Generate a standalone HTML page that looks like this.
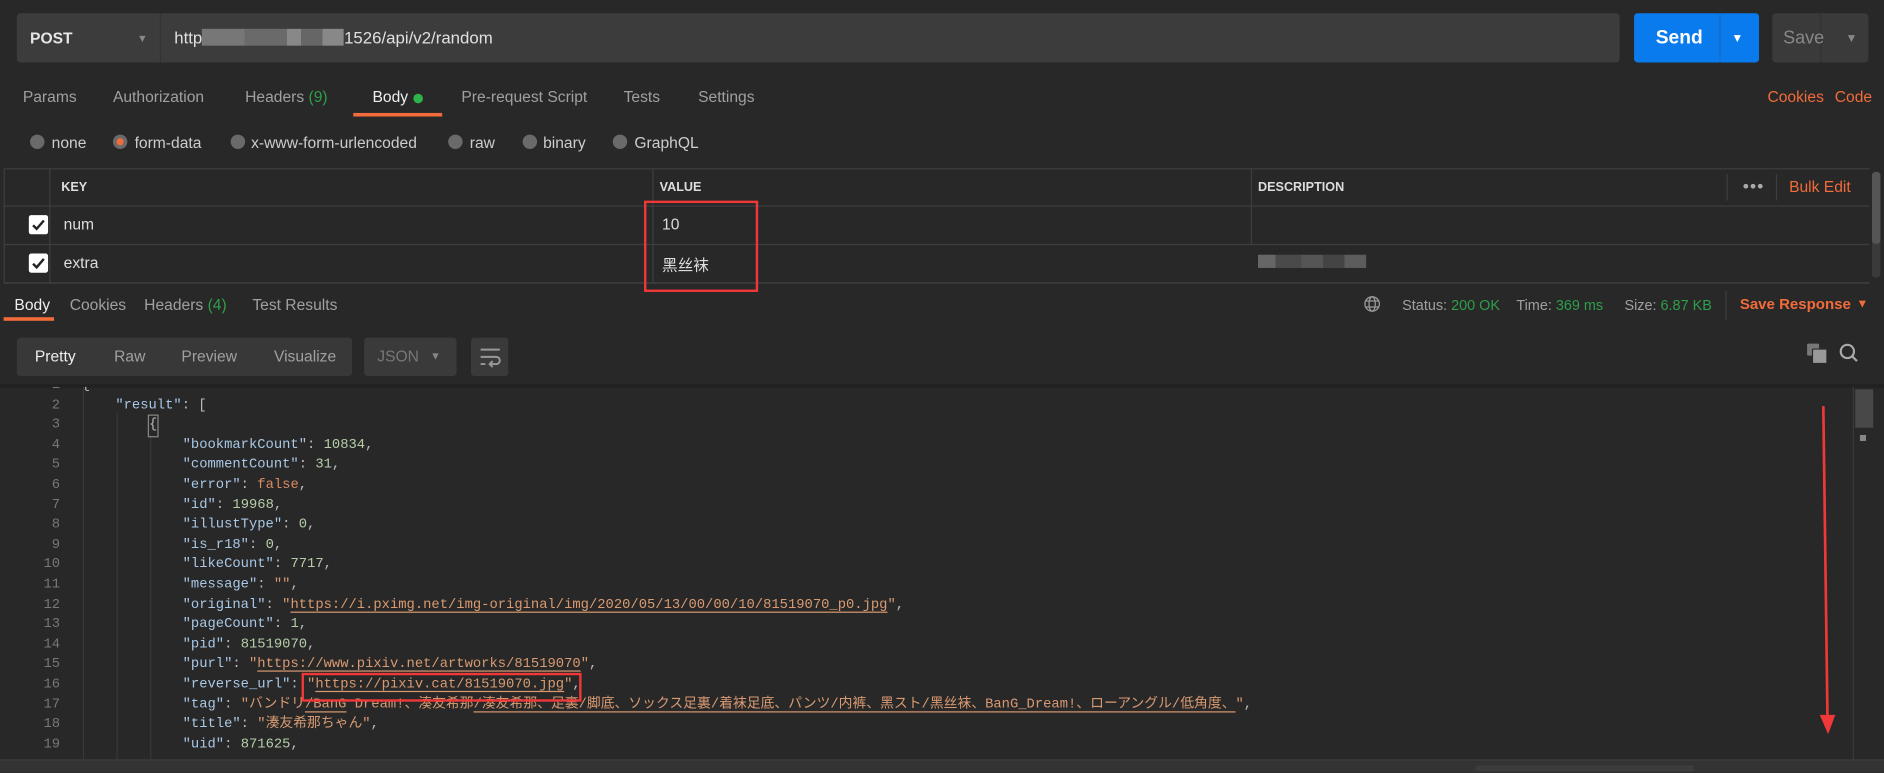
<!DOCTYPE html>
<html><head><meta charset="utf-8">
<style>
html,body{margin:0;padding:0;background:#282828;overflow:hidden;width:1884px;height:771px}
#w{position:absolute;left:0;top:0;width:1568px;height:642px;transform:scale(1.20153);transform-origin:0 0;background:#282828;font-family:"Liberation Sans","Noto Sans CJK SC",sans-serif;color:#a0a0a0;font-size:13px}
.a{position:absolute;white-space:nowrap}
.or{color:#f26b3a}
.gr{color:#2f9e4a}
.code{font-family:"Liberation Mono","Noto Sans CJK JP",monospace;font-size:11.5px;line-height:16.6px}
.k{color:#a9c8e6}.s{color:#d99a72}.n{color:#b5cea8}.p{color:#bbb}.b{color:#d98c62}
.u{text-decoration:underline;text-decoration-color:#d99a72;text-underline-offset:3px}
.ln{position:absolute;left:20px;width:30px;text-align:right;color:#777}
.rad{position:absolute;width:12px;height:12px;border-radius:50%;background:#6a6a6a;top:112px}
.hl{position:absolute;height:1px;background:#3e3e3e}
.vl{position:absolute;width:1px;background:#3e3e3e}
.cb{position:absolute;left:24px;width:16px;height:16px;background:#fff;border-radius:2px}
</style></head><body><div id="w">
<!-- top bar -->
<div class="a" style="left:14px;top:11px;width:1334px;height:41px;background:#3c3c3c;border-radius:3px"></div>
<div class="a" style="left:133px;top:11px;width:1px;height:41px;background:#333"></div>
<div class="a" style="left:25px;top:24px;color:#e6e6e6;font-weight:bold;font-size:13px">POST</div>
<div class="a" style="left:114px;top:27px;color:#888;font-size:9px">▼</div>
<div class="a" style="left:145px;top:23px;color:#e0e0e0;font-size:14px">http<span style="display:inline-block;width:118px;height:14px;vertical-align:-2px;background:linear-gradient(90deg,#777 0 30%,#6a6a6a 30% 60%,#888 60% 70%,#666 70% 85%,#888 85%)"></span>1526/api/v2/random</div>
<div class="a" style="left:1360px;top:11px;width:104px;height:41px;background:#097bed;border-radius:3px"></div>
<div class="a" style="left:1431px;top:11px;width:1px;height:41px;background:#1a69c0"></div>
<div class="a" style="left:1378px;top:23px;color:#fff;font-weight:bold;font-size:16px">Send</div>
<div class="a" style="left:1441px;top:27px;color:#fff;font-size:10px">▼</div>
<div class="a" style="left:1475px;top:11px;width:80px;height:41px;background:#3a3a3a;border-radius:3px"></div>
<div class="a" style="left:1515px;top:11px;width:1px;height:41px;background:#333"></div>
<div class="a" style="left:1484px;top:23px;color:#888;font-size:15px">Save</div>
<div class="a" style="left:1536px;top:27px;color:#888;font-size:10px">▼</div>
<!-- tabs -->
<div class="a" style="left:19px;top:73px">Params</div>
<div class="a" style="left:94px;top:73px">Authorization</div>
<div class="a" style="left:204px;top:73px">Headers <span class="gr">(9)</span></div>
<div class="a" style="left:310px;top:73px;color:#eee">Body</div>
<div class="a" style="left:344px;top:78px;width:8px;height:8px;border-radius:50%;background:#2fb24a"></div>
<div class="a" style="left:294px;top:94px;width:74px;height:3px;background:#f26b3a"></div>
<div class="a" style="left:384px;top:73px">Pre-request Script</div>
<div class="a" style="left:519px;top:73px">Tests</div>
<div class="a" style="left:581px;top:73px">Settings</div>
<div class="a or" style="left:1471px;top:73px">Cookies</div>
<div class="a or" style="left:1527px;top:73px">Code</div>
<!-- radios -->
<div class="rad" style="left:25px"></div><div class="a" style="left:43px;top:111px;color:#ccc">none</div>
<div class="rad" style="left:94px"></div><div class="a" style="left:97px;top:115px;width:6px;height:6px;border-radius:50%;background:#f26b3a"></div><div class="a" style="left:112px;top:111px;color:#ccc">form-data</div>
<div class="rad" style="left:192px"></div><div class="a" style="left:209px;top:111px;color:#ccc">x-www-form-urlencoded</div>
<div class="rad" style="left:373px"></div><div class="a" style="left:391px;top:111px;color:#ccc">raw</div>
<div class="rad" style="left:435px"></div><div class="a" style="left:452px;top:111px;color:#ccc">binary</div>
<div class="rad" style="left:510px"></div><div class="a" style="left:528px;top:111px;color:#ccc">GraphQL</div>
<!-- table -->
<div class="hl" style="left:3px;top:140px;width:1553px"></div>
<div class="hl" style="left:3px;top:171px;width:1553px"></div>
<div class="hl" style="left:3px;top:203px;width:1553px"></div>
<div class="hl" style="left:3px;top:235px;width:1553px;background:#444"></div>
<div class="vl" style="left:3px;top:140px;height:95px"></div>
<div class="vl" style="left:41px;top:140px;height:95px"></div>
<div class="vl" style="left:543px;top:140px;height:95px"></div>
<div class="vl" style="left:1041px;top:140px;height:63px"></div>
<div class="vl" style="left:1437px;top:145px;height:22px"></div>
<div class="vl" style="left:1478px;top:145px;height:22px"></div>
<div class="a" style="left:51px;top:150px;color:#ddd;font-weight:bold;font-size:10.5px">KEY</div>
<div class="a" style="left:549px;top:150px;color:#ddd;font-weight:bold;font-size:10.5px">VALUE</div>
<div class="a" style="left:1047px;top:150px;color:#ddd;font-weight:bold;font-size:10.5px">DESCRIPTION</div>
<div class="a" style="left:1451px;top:153px;width:4px;height:4px;border-radius:50%;background:#aaa"></div>
<div class="a" style="left:1457px;top:153px;width:4px;height:4px;border-radius:50%;background:#aaa"></div>
<div class="a" style="left:1463px;top:153px;width:4px;height:4px;border-radius:50%;background:#aaa"></div>
<div class="a or" style="left:1489px;top:148px">Bulk Edit</div>
<div class="a" style="left:1558px;top:143px;width:7px;height:88px;background:#3a3a3a;border-radius:3px"></div>
<div class="a" style="left:1558px;top:143px;width:7px;height:60px;background:#555;border-radius:3px"></div>
<div class="cb" style="top:179px"></div>
<svg class="a" style="left:24px;top:179px" width="16" height="16" viewBox="0 0 16 16"><path d="M3.5 8.5l3 3 6-7" stroke="#222" stroke-width="2" fill="none"/></svg>
<div class="cb" style="top:211px"></div>
<svg class="a" style="left:24px;top:211px" width="16" height="16" viewBox="0 0 16 16"><path d="M3.5 8.5l3 3 6-7" stroke="#222" stroke-width="2" fill="none"/></svg>
<div class="a" style="left:53px;top:179px;color:#ddd">num</div>
<div class="a" style="left:53px;top:211px;color:#ddd">extra</div>
<div class="a" style="left:551px;top:179px;color:#ddd">10</div>
<div class="a" style="left:551px;top:210px;color:#ddd">黑丝袜</div>
<div class="a" style="left:1047px;top:212px;width:90px;height:11px;background:linear-gradient(90deg,#666 0 16%,#4a4a4a 16% 40%,#555 40% 60%,#444 60% 80%,#5c5c5c 80%)"></div>
<div class="a" style="left:536px;top:167px;width:91px;height:72px;border:2px solid #f03838"></div>
<!-- response tabs -->
<div class="a" style="left:12px;top:246px;color:#eee">Body</div>
<div class="a" style="left:3px;top:264px;width:42px;height:3px;background:#f26b3a"></div>
<div class="a" style="left:58px;top:246px">Cookies</div>
<div class="a" style="left:120px;top:246px">Headers <span class="gr">(4)</span></div>
<div class="a" style="left:210px;top:246px">Test Results</div>
<svg class="a" style="left:1135px;top:246px" width="14" height="14" viewBox="0 0 14 14" fill="none" stroke="#999" stroke-width="1.1"><circle cx="7" cy="7" r="6"/><ellipse cx="7" cy="7" rx="2.6" ry="6"/><path d="M1.5 4.5h11M1.5 9.5h11"/></svg>
<div class="a" style="left:1167px;top:247px;font-size:12px">Status: <span class="gr">200 OK</span></div>
<div class="a" style="left:1262px;top:247px;font-size:12px">Time: <span class="gr">369 ms</span></div>
<div class="a" style="left:1352px;top:247px;font-size:12px">Size: <span class="gr">6.87 KB</span></div>
<div class="vl" style="left:1436px;top:242px;height:24px"></div>
<div class="a or" style="left:1448px;top:246px;font-weight:bold;font-size:12.5px">Save Response</div>
<div class="a or" style="left:1545px;top:248px;font-size:10px">▼</div>
<!-- toolbar -->
<div class="a" style="left:14px;top:281px;width:279px;height:32px;background:#383838;border-radius:3px"></div>
<div class="a" style="left:29px;top:289px;color:#eee">Pretty</div>
<div class="a" style="left:95px;top:289px">Raw</div>
<div class="a" style="left:151px;top:289px">Preview</div>
<div class="a" style="left:228px;top:289px">Visualize</div>
<div class="a" style="left:303px;top:281px;width:77px;height:32px;background:#3a3a3a;border-radius:3px"></div>
<div class="a" style="left:314px;top:289px;color:#777">JSON</div>
<div class="a" style="left:358px;top:291px;color:#888;font-size:9px">▼</div>
<div class="a" style="left:392px;top:281px;width:31px;height:32px;background:#3a3a3a;border-radius:3px"></div>
<svg class="a" style="left:398px;top:288px" width="20" height="18" viewBox="0 0 20 18" fill="none" stroke="#999" stroke-width="1.6"><path d="M2 3h16M2 9h13a3 3 0 0 1 0 6h-5M12 12.5l-2.5 2.5 2.5 2.5M2 15h4"/></svg>
<div class="a" style="left:1504px;top:286px;width:10px;height:10px;background:#777;border-radius:1px"></div>
<div class="a" style="left:1508px;top:290px;width:11px;height:11px;background:#999;border:1px solid #2a2a2a;border-radius:1px"></div>
<svg class="a" style="left:1530px;top:285px" width="18" height="18" viewBox="0 0 18 18" fill="none" stroke="#aaa" stroke-width="1.8"><circle cx="7.5" cy="7.5" r="5.5"/><path d="M11.5 11.5l4 4"/></svg>
<!-- code area -->
<div class="a" style="left:0;top:320px;width:1568px;height:4px;background:linear-gradient(#1e1e1e,#282828)"></div>
<div class="a" style="left:0;top:322px;width:1540px;height:310px;overflow:hidden">
 <div class="vl" style="left:69px;top:0;height:310px;background:#383838"></div>
 <div class="vl" style="left:97px;top:22px;height:290px;background:#383838"></div>
 <div class="vl" style="left:125px;top:40px;height:270px;background:#383838"></div>
 <div class="code" style="position:absolute;left:0;top:-9px;width:1540px">
  <div style="position:relative;height:16.6px"><span class="ln">1</span><span class="a p" style="left:68px">{</span></div>
  <div style="position:relative;height:16.6px"><span class="ln">2</span><span class="a" style="left:96px"><span class="k">"result"</span><span class="p">: [</span></span></div>
  <div style="position:relative;height:16.6px"><span class="ln">3</span><span class="a p" style="left:124px;outline:1px solid #888">{</span></div>
  <div style="position:relative;height:16.6px"><span class="ln">4</span><span class="a" style="left:152px"><span class="k">"bookmarkCount"</span><span class="p">: </span><span class="n">10834</span><span class="p">,</span></span></div>
  <div style="position:relative;height:16.6px"><span class="ln">5</span><span class="a" style="left:152px"><span class="k">"commentCount"</span><span class="p">: </span><span class="n">31</span><span class="p">,</span></span></div>
  <div style="position:relative;height:16.6px"><span class="ln">6</span><span class="a" style="left:152px"><span class="k">"error"</span><span class="p">: </span><span class="b">false</span><span class="p">,</span></span></div>
  <div style="position:relative;height:16.6px"><span class="ln">7</span><span class="a" style="left:152px"><span class="k">"id"</span><span class="p">: </span><span class="n">19968</span><span class="p">,</span></span></div>
  <div style="position:relative;height:16.6px"><span class="ln">8</span><span class="a" style="left:152px"><span class="k">"illustType"</span><span class="p">: </span><span class="n">0</span><span class="p">,</span></span></div>
  <div style="position:relative;height:16.6px"><span class="ln">9</span><span class="a" style="left:152px"><span class="k">"is_r18"</span><span class="p">: </span><span class="n">0</span><span class="p">,</span></span></div>
  <div style="position:relative;height:16.6px"><span class="ln">10</span><span class="a" style="left:152px"><span class="k">"likeCount"</span><span class="p">: </span><span class="n">7717</span><span class="p">,</span></span></div>
  <div style="position:relative;height:16.6px"><span class="ln">11</span><span class="a" style="left:152px"><span class="k">"message"</span><span class="p">: </span><span class="s">""</span><span class="p">,</span></span></div>
  <div style="position:relative;height:16.6px"><span class="ln">12</span><span class="a" style="left:152px"><span class="k">"original"</span><span class="p">: </span><span class="s">"<span class="u">https://i.pximg.net/img-original/img/2020/05/13/00/00/10/81519070_p0.jpg</span>"</span><span class="p">,</span></span></div>
  <div style="position:relative;height:16.6px"><span class="ln">13</span><span class="a" style="left:152px"><span class="k">"pageCount"</span><span class="p">: </span><span class="n">1</span><span class="p">,</span></span></div>
  <div style="position:relative;height:16.6px"><span class="ln">14</span><span class="a" style="left:152px"><span class="k">"pid"</span><span class="p">: </span><span class="n">81519070</span><span class="p">,</span></span></div>
  <div style="position:relative;height:16.6px"><span class="ln">15</span><span class="a" style="left:152px"><span class="k">"purl"</span><span class="p">: </span><span class="s">"<span class="u">https://www.pixiv.net/artworks/81519070</span>"</span><span class="p">,</span></span></div>
  <div style="position:relative;height:16.6px"><span class="ln">16</span><span class="a" style="left:152px"><span class="k">"reverse_url"</span><span class="p">: </span><span class="s">"<span class="u">https://pixiv.cat/81519070.jpg</span>"</span><span class="p">,</span></span></div>
  <div style="position:relative;height:16.6px"><span class="ln">17</span><span class="a" style="left:152px"><span class="k">"tag"</span><span class="p">: </span><span class="s">"バンドリ<span class="u">/BanG</span> Dream!、湊友希那<span class="u">/湊友希那、足裏/脚底、ソックス足裏/着袜足底、パンツ/内裤、黑スト/黑丝袜、BanG_Dream!、ローアングル/低角度、</span>"</span><span class="p">,</span></span></div>
  <div style="position:relative;height:16.6px"><span class="ln">18</span><span class="a" style="left:152px"><span class="k">"title"</span><span class="p">: </span><span class="s">"湊友希那ちゃん"</span><span class="p">,</span></span></div>
  <div style="position:relative;height:16.6px"><span class="ln">19</span><span class="a" style="left:152px"><span class="k">"uid"</span><span class="p">: </span><span class="n">871625</span><span class="p">,</span></span></div>
 </div>
</div>
<div class="a" style="left:251px;top:560px;width:229px;height:20px;border:2px solid #f03838"></div>
<!-- scrollbar -->
<div class="vl" style="left:1542px;top:322px;height:310px;background:#3a3a3a"></div>
<div class="a" style="left:1544px;top:324px;width:15px;height:32px;background:#484848"></div>
<div class="a" style="left:1548px;top:362px;width:5px;height:5px;background:#888"></div>
<!-- red arrow -->
<svg class="a" style="left:1510px;top:335px" width="24" height="280" viewBox="0 0 24 280"><path d="M7.5 3 L11 265" stroke="#f03838" stroke-width="2.2" fill="none"/><path d="M4.5 260 L17.5 260 L11.5 276 Z" fill="#f03838"/></svg>
<!-- bottom bar -->
<div class="a" style="left:0;top:632px;width:1568px;height:10px;background:#333;border-top:1px solid #3e3e3e"></div>
<div class="a" style="left:1228px;top:637px;width:182px;height:5px;background:#3c3c3c;border-radius:3px 3px 0 0"></div>
</div></body></html>
